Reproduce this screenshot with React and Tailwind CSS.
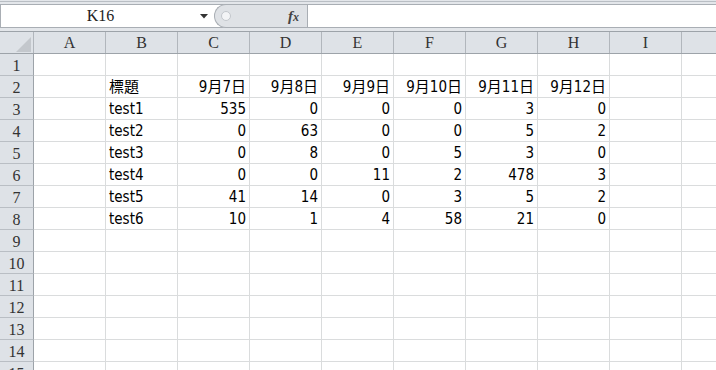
import React from "react";

const cols = ["A", "B", "C", "D", "E", "F", "G", "H", "I", ""];

// sheet data: row number -> cells by column letter
const data = {
  2: { B: "標題", C: "9月7日", D: "9月8日", E: "9月9日", F: "9月10日", G: "9月11日", H: "9月12日" },
  3: { B: "test1", C: 535, D: 0, E: 0, F: 0, G: 3, H: 0 },
  4: { B: "test2", C: 0, D: 63, E: 0, F: 0, G: 5, H: 2 },
  5: { B: "test3", C: 0, D: 8, E: 0, F: 5, G: 3, H: 0 },
  6: { B: "test4", C: 0, D: 0, E: 11, F: 2, G: 478, H: 3 },
  7: { B: "test5", C: 41, D: 14, E: 0, F: 3, G: 5, H: 2 },
  8: { B: "test6", C: 10, D: 1, E: 4, F: 58, G: 21, H: 0 },
};

const rows = Array.from({ length: 15 }, (_, i) => i + 1);

const serif = { fontFamily: '"Liberation Serif", "DejaVu Serif", serif' };
const cellFont = {
  fontFamily: '"DejaVu Sans Condensed", "Liberation Sans", "Noto Sans CJK TC", sans-serif',
};

const App = () => {
  return (
    <div className="w-[716px] h-[370px] overflow-hidden bg-white flex flex-col">
      {/* FORMULA BAR */}
      <div className="h-[31px] shrink-0 bg-[#e3e6ea] pt-[1px]">
        <div className="border-t border-[#b9bec4] pt-[2px]">
          <div className="h-[24px] flex border-y border-l border-[#a9aeb4] bg-white">
            <div className="w-[199px] flex items-center justify-center text-[16px] text-[#222]" style={serif}>
              K16
            </div>
            <div className="w-[14px] flex items-center justify-start">
              <svg width="8" height="5" viewBox="0 0 8 5">
                <path d="M0 0 L8 0 L4 4.5 Z" fill="#333" />
              </svg>
            </div>
            <div className="relative w-[93px] -my-[1px] h-[24px] bg-[#dfe2e6] border border-r-0 border-[#a9aeb4] rounded-l-full flex items-center">
              <div className="ml-[6px] w-[10px] h-[10px] rounded-full bg-[#f3f4f6] border border-[#c3c7cc]" />
              <span
                className="ml-auto mr-[8px] text-[15px] italic font-bold text-[#444]"
                style={serif}
              >
                f<span className="text-[12px]">x</span>
              </span>
            </div>
            <div className="flex-1 border-l border-[#a9aeb4]" />
          </div>
        </div>
      </div>

      {/* COLUMN HEADERS */}
      <div className="h-[23px] shrink-0 flex border-y border-[#9da3a9] bg-[#dee2e7]">
        <div className="w-[34px] shrink-0 border-r border-[#b1b6bc] flex items-end justify-end pr-[2px] pb-[1px]">
          <svg width="15" height="15" viewBox="0 0 15 15">
            <path d="M15 0 L15 15 L0 15 Z" fill="#c3c7cc" />
          </svg>
        </div>
        {cols.map((c, i) => (
          <div
            key={i}
            className="w-[72px] shrink-0 border-r border-[#b1b6bc] flex items-center justify-center text-[16px] text-[#333]"
            style={serif}
          >
            {c}
          </div>
        ))}
      </div>

      {/* GRID */}
      {rows.map((r) => (
        <div key={r} className="h-[22px] shrink-0 flex">
          <div
            className="w-[34px] shrink-0 bg-[#dee2e7] border-r border-[#9da3a9] border-b border-b-[#b9bec4] flex items-center justify-center pt-[2px] text-[16px] text-[#333]"
            style={serif}
          >
            {r}
          </div>
          {cols.map((c, i) => {
            const v = data[r]?.[c];
            const isNum = typeof v === "number" || (r === 2 && c !== "B");
            return (
              <div
                key={i}
                className={`w-[72px] shrink-0 border-r border-b border-[#dadcdd] flex items-end pb-[1px] text-[15px] leading-[18px] text-black px-[3px] ${
                  isNum ? "justify-end" : "justify-start"
                }`}
                style={cellFont}
              >
                {v}
              </div>
            );
          })}
        </div>
      ))}
    </div>
  );
};

export default App;
